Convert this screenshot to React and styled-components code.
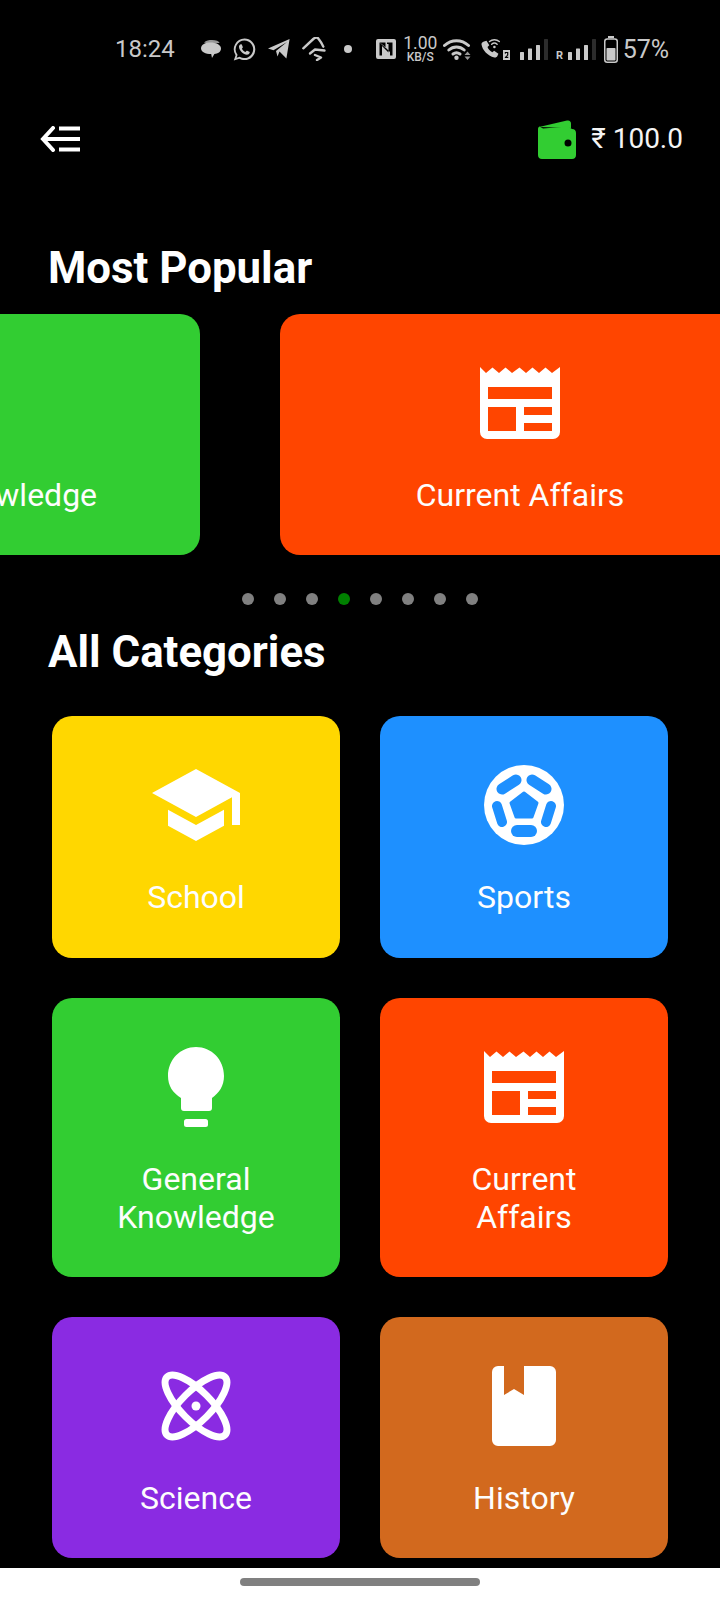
import React from 'react'
import styled, { createGlobalStyle } from 'styled-components'

const GlobalStyle = createGlobalStyle`
    * { box-sizing: border-box; }
    html, body {
        margin: 0;
        background: #000;
        font-family: Roboto, "Liberation Sans", sans-serif;
    }
`

const statusGrey = '#c9c9c9'

const Page = styled.div`
    width: 720px;
    height: 1600px;
    overflow: hidden;
    display: flex;
    flex-direction: column;
    background: #000;
    color: #fff;
`

const StatusBar = styled.div`
    height: 98px;
    flex: none;
    display: flex;
    align-items: center;
    padding-left: 115px;
    color: ${statusGrey};
`

const StatusText = styled.span`
    font-size: ${({ $size }) => $size || 24}px;
    line-height: 1;
    margin-left: ${({ $left }) => $left || 0}px;
`

const StatusIcon = styled.svg`
    display: block;
    flex: none;
    margin-left: ${({ $left }) => $left || 0}px;
    fill: currentColor;
`

const Speed = styled.div`
    margin-left: ${({ $left }) => $left}px;
    width: 31px;
    display: flex;
    flex-direction: column;
    align-items: center;
    line-height: 1;
`

const SpeedValue = styled.span`
    font-size: 17.5px;
    height: 15px;
    line-height: 15px;
`

const SpeedUnit = styled.span`
    font-size: 12px;
    font-weight: 500;
    height: 10px;
    line-height: 10px;
    margin-top: 1px;
`

const Header = styled.header`
    height: 82px;
    flex: none;
    display: flex;
    align-items: center;
    justify-content: space-between;
    padding: 0 37px 0 40px;
`

const Wallet = styled.div`
    display: flex;
    align-items: center;
    gap: 15px;
`

const Balance = styled.span`
    font-size: 28px;
    font-weight: 400;
    line-height: 1;
    color: #f4f4f4;
`

const SectionTitle = styled.h2`
    margin: ${({ $top }) => $top}px 0 0 48px;
    font-size: 43.8px;
    line-height: 48px;
    font-weight: 700;
`

const Carousel = styled.div`
    margin-top: 22px;
    overflow: hidden;
    flex: none;
`

const Track = styled.div`
    display: flex;
    gap: 80px;
    margin-left: -280px;
    width: 1200px;
`

const Card = styled.div`
    flex: none;
    width: ${({ $wide }) => ($wide ? '480px' : 'auto')};
    border-radius: 20px;
    background: ${({ $bg }) => $bg};
    display: flex;
    flex-direction: column;
    align-items: center;
    padding: 49px 16px 41px;
`

const IconBox = styled.div`
    height: 80px;
    display: flex;
    align-items: center;
    justify-content: center;
`

const Label = styled.div`
    margin-top: 33px;
    font-size: 32px;
    line-height: 38.25px;
    text-align: center;
    color: #fdfdfd;
    max-width: ${({ $narrow }) => ($narrow ? '180px' : 'none')};
`

const Dots = styled.div`
    margin-top: 38px;
    display: flex;
    justify-content: center;
    gap: 20px;
`

const Dot = styled.span`
    width: 12px;
    height: 12px;
    border-radius: 50%;
    background: ${({ $active }) => ($active ? '#008000' : '#808080')};
`

const Grid = styled.div`
    margin-top: 40px;
    padding: 0 52px;
    display: grid;
    grid-template-columns: 288px 288px;
    gap: 40px;
`

const NavBar = styled.div`
    margin-top: auto;
    height: 32px;
    flex: none;
    background: #fff;
    display: flex;
    justify-content: center;
    padding-top: 10px;
`

const HomePill = styled.div`
    width: 240px;
    height: 8px;
    border-radius: 4px;
    background: #808080;
`

/* status bar drawings */
const ChatBubble = ({ left }) => (
    <StatusIcon $left={left} width="20" height="18" viewBox="0 0 20 18">
        <path d="M3 2.400C5 .6 8 0 11 0c4 0 7 1 7.600 3H9C6 3 4 2.800 3 2.400z" opacity=".75" />
        <path d="M9.500 2.500C15 2.500 20 4.600 20 8.500c0 3.400-3.200 5.200-6.600 5.400L11 18l-.8-4C4.500 14 0 12 0 8.200 0 4.500 4.500 2.500 9.500 2.500z" />
    </StatusIcon>
)

const WhatsApp = ({ left }) => (
    <StatusIcon $left={left} width="23" height="23" viewBox="0 0 23 23">
        <path fillRule="evenodd" d="M11.500 0.500a10.800 10.800 0 0 1 0 21.600c-1.900 0-3.700-.5-5.300-1.400L.8 22.500l1.800-5.300A10.800 10.800 0 0 1 11.500.5zm0 2a8.800 8.800 0 0 0-7.200 13.900l.3.400-1 3 3.100-1 .4.200a8.800 8.800 0 1 0 4.400-16.500z" />
        <path d="M8 6.300c.4 0 .7 0 .9.500l.9 2.200c.1.300 0 .6-.2.800l-.7.900c.8 1.500 2 2.600 3.600 3.300l.9-1.100c.2-.2.500-.3.800-.2l2.200 1.100c.4.200.4.500.3.900-.3 1.300-1.500 2-2.700 2-3.600-.2-7.700-3.800-8-7.700-.1-1.100.7-2.700 2-2.700z" />
    </StatusIcon>
)

const Telegram = ({ left }) => (
    <StatusIcon $left={left} width="22" height="20" viewBox="0 0 22 20">
        <path d="M0 9.500 21.600 0 18.400 19.600 11.500 12.500 9.500 17.500 8 12 19 3 5.500 11.200z" />
    </StatusIcon>
)

const Arrows = ({ left }) => (
    <StatusIcon $left={left} width="24" height="24" viewBox="0 0 24 24">
        <g fill="none" stroke="currentColor" strokeWidth="2.400" strokeLinecap="round" strokeLinejoin="round">
            <path d="M1.300 11.300 11.300 2c2-1.800 4-2 5.200-.3 2 2.500 3.700 5 4.800 8" />
            <path d="M8 16.500 13 12.500 22.500 13.500" />
            <path d="M13 18 19 20.500 15 23" />
        </g>
    </StatusIcon>
)

const Nfc = ({ left }) => (
    <StatusIcon $left={left} width="20" height="20" viewBox="0 0 20 20">
        <path fillRule="evenodd" d="M2 0h16a2 2 0 0 1 2 2v16a2 2 0 0 1-2 2H2a2 2 0 0 1-2-2V2a2 2 0 0 1 2-2zm1.500 3.500V16.500H6V7l6.500 6.500V5H11V3.500H9.500V9zM14 3.500V13l-7-7v0L3.500 3.500zm0 0v13h2.500v-13z" />
    </StatusIcon>
)

const Wifi = ({ left }) => (
    <StatusIcon $left={left} width="29" height="21" viewBox="0 0 29 21">
        <g fill="none" stroke="currentColor" strokeWidth="3" strokeLinecap="round">
            <path d="M1.500 6.500c7-6.500 17-6.500 24 0" />
            <path d="M5.800 11c4.500-4 10.900-4 15.400 0" />
            <path d="M10 15c2-1.500 5-1.500 7 0" />
        </g>
        <circle cx="13.500" cy="18.800" r="2.200" />
        <path d="M24.500 12.500 27.500 16h-6zM24.500 21l-3-3.500h6z" opacity=".75" />
    </StatusIcon>
)

const CallWifi = ({ left }) => (
    <StatusIcon $left={left} width="30" height="22" viewBox="0 0 30 22">
        <path d="M4 3.500l2.500-.8 2.800 4.600-1.800 1.600c.9 2.300 2.600 4.200 4.900 5.400l1.700-1.600 4.300 3-1 2.300c-.6 1.200-1.800 1.700-3 1.400C7.500 17.500 2.400 12 1.500 6.400c-.2-1.200.8-2.500 2.500-2.900z" />
        <g fill="none" stroke="currentColor" strokeWidth="1.500" strokeLinecap="round">
            <path d="M9.500 3.500c2.800-2.500 7-2.500 9.800 0" />
            <path d="M11.700 6.200c1.600-1.400 3.800-1.400 5.400 0" />
        </g>
        <circle cx="14.400" cy="9" r="1.300" />
        <path fillRule="evenodd" d="M23 12h7v10h-7zM24.800 15.700h1v-.7h1.300v2l-2.300 2.200V20h3.500v-1.200h-1.700l1.700-1.600V14h-3.500z" />
    </StatusIcon>
)

const Signal = ({ left, roaming }) => (
    <StatusIcon $left={left} width={roaming ? 40 : 28} height="21" viewBox={roaming ? '0 0 40 21' : '0 0 28 21'}>
        {roaming && <text x="0" y="19.500" fontSize="11" fontWeight="700">R</text>}
        <g transform={roaming ? 'translate(12 0)' : undefined}>
            <rect x="0" y="13" width="4" height="8" rx=".5" />
            <rect x="8" y="9.500" width="4" height="11.500" rx=".5" />
            <rect x="16" y="6" width="4" height="15" rx=".5" />
            <rect x="24" y="0" width="4" height="21" rx=".5" opacity=".22" />
        </g>
    </StatusIcon>
)

const Battery = ({ left }) => (
    <StatusIcon $left={left} width="14" height="27" viewBox="0 0 14 27">
        <rect x="4" y="0" width="6" height="2.200" />
        <rect x=".75" y="3" width="12.500" height="23.250" rx="2.500" fill="none" stroke="currentColor" strokeWidth="1.500" />
        <rect x="2.500" y="12" width="9" height="12.500" rx=".8" />
    </StatusIcon>
)

const StatusRow = () => (
    <StatusBar>
        <StatusText>18:24</StatusText>
        <ChatBubble left={26} />
        <WhatsApp left={12} />
        <Telegram left={12} />
        <Arrows left={12} />
        <StatusIcon $left={18} width="8" height="8" viewBox="0 0 8 8"><circle cx="4" cy="4" r="4" /></StatusIcon>
        <Nfc left={24} />
        <Speed $left={9}>
            <SpeedValue>1.00</SpeedValue>
            <SpeedUnit>KB/S</SpeedUnit>
        </Speed>
        <Wifi left={7} />
        <CallWifi left={8} />
        <Signal left={10} />
        <Signal left={8} roaming />
        <Battery left={8} />
        <StatusText $left={5} $size={25}>57%</StatusText>
    </StatusBar>
)

/* header drawings */
const BackMenuIcon = () => (
    <svg width="40" height="26" viewBox="0 0 40 26" fill="none" stroke="#fff" strokeWidth="4">
        <path d="M13 2 3 13l10 11" strokeLinecap="round" />
        <path d="M19 2.500h21M3 13h37M19 23.500h21" />
    </svg>
)

const WalletIcon = () => (
    <svg width="38" height="39" viewBox="0 0 38 39">
        <path d="M1 7 29 .6c2.500-.6 4 .8 4 3V8z" fill="#32cd32" />
        <path fillRule="evenodd" fill="#32cd32" d="M5 8.500 30 6.500 34 9c2.500 0 4 1.500 4 4v22c0 2.500-1.500 4-4 4H4c-2.500 0-4-1.500-4-4V9c0-1 .5-2 1.500-2.500zM30 19.500a3.500 3.500 0 1 0 0 7 3.500 3.500 0 0 0 0-7z" />
    </svg>
)

/* category drawings */
const NewspaperIcon = () => (
    <svg width="80" height="72" viewBox="0 0 80 72" fill="#fff">
        <path fillRule="evenodd" d="M0 0l6 6 6.500-5.500L19 6l6.500-5.500L32 6l7.500-5.500L46 6l6.500-5.500L59 6l6.500-5.500L72 6l8-6v65a7 7 0 0 1-7 7H7a7 7 0 0 1-7-7zM8 20v12h64V20zM8 40v24h28V40zM44 40v8h28v-8zM44 56v8h28v-8z" />
    </svg>
)

const SchoolIcon = () => (
    <svg width="88" height="72" viewBox="1 3 22 18" fill="#fff">
        <path d="M5 13.180v4L12 21l7-3.820v-4L12 17l-7-3.820zM12 3 1 9l11 6 9-4.910V17h2V9L12 3z" />
    </svg>
)

const BallIcon = ({ id = 'ball' }) => (
    <svg width="80" height="80" viewBox="0 0 80 80">
        <mask id={id}>
            <rect width="80" height="80" fill="#fff" />
            <path d="M40 28 53 38 48 52H32L27 38z" fill="#000" stroke="#000" strokeWidth="3" strokeLinejoin="round" />
            <g fill="none" stroke="#000" strokeLinecap="round">
                <path d="M18 24 32 15M62 24 48 15" strokeWidth="11" />
                <path d="M13 41 18 57M67 41 62 57" strokeWidth="10" />
                <path d="M33 66H47" strokeWidth="12" />
            </g>
        </mask>
        <circle cx="40" cy="40" r="40" fill="#fff" mask={`url(#${id})`} />
    </svg>
)

const BulbIcon = () => (
    <svg width="56" height="80" viewBox="0 0 56 80" fill="#fff">
        <path d="M28 0c15.500 0 28 12.500 28 29 0 10-5 17-12 22v10a3 3 0 0 1-3 3H16a3 3 0 0 1-3-3V51C5 46 0 39 0 29 0 12.500 12.500 0 28 0z" />
        <rect x="16" y="72" width="24" height="8" rx="2.500" />
    </svg>
)

const AtomIcon = () => (
    <svg width="70" height="72" viewBox="0 0 70 72" fill="none" stroke="#fff" strokeWidth="7">
        <ellipse cx="35" cy="36" rx="41" ry="15" transform="rotate(45 35 36)" />
        <ellipse cx="35" cy="36" rx="41" ry="15" transform="rotate(-45 35 36)" />
        <circle cx="35" cy="36" r="4.500" fill="#fff" stroke="none" />
    </svg>
)

const BookIcon = () => (
    <svg width="64" height="80" viewBox="0 0 64 80" fill="#fff">
        <path d="M6 0h6v29l10-6 10 6V0h26a6 6 0 0 1 6 6v68a6 6 0 0 1-6 6H6a6 6 0 0 1-6-6V6a6 6 0 0 1 6-6z" />
    </svg>
)

const categories = [
    { name: 'School', bg: '#ffd700', icon: <SchoolIcon /> },
    { name: 'Sports', bg: '#1e90ff', icon: <BallIcon /> },
    { name: 'General Knowledge', bg: '#32cd32', icon: <BulbIcon /> },
    { name: 'Current Affairs', bg: '#ff4500', icon: <NewspaperIcon /> },
    { name: 'Science', bg: '#8a2be2', icon: <AtomIcon /> },
    { name: 'History', bg: '#d2691e', icon: <BookIcon /> },
]

const dots = [0, 1, 2, 3, 4, 5, 6, 7]

const App = () => (
    <Page>
        <GlobalStyle />
        <StatusRow />
        <Header>
            <BackMenuIcon />
            <Wallet>
                <WalletIcon />
                <Balance>₹ 100.0</Balance>
            </Wallet>
        </Header>
        <SectionTitle $top={64}>Most Popular</SectionTitle>
        <Carousel>
            <Track>
                <Card $wide $bg="#32cd32">
                    <IconBox><BulbIcon /></IconBox>
                    <Label>General Knowledge</Label>
                </Card>
                <Card $wide $bg="#ff4500">
                    <IconBox><NewspaperIcon /></IconBox>
                    <Label>Current Affairs</Label>
                </Card>
            </Track>
        </Carousel>
        <Dots>
            {dots.map((d) => <Dot key={d} $active={d === 3} />)}
        </Dots>
        <SectionTitle $top={23}>All Categories</SectionTitle>
        <Grid>
            {categories.map((c) => (
                <Card key={c.name} $bg={c.bg}>
                    <IconBox>{c.icon}</IconBox>
                    <Label $narrow>{c.name}</Label>
                </Card>
            ))}
        </Grid>
        <NavBar>
            <HomePill />
        </NavBar>
    </Page>
)

export default App
